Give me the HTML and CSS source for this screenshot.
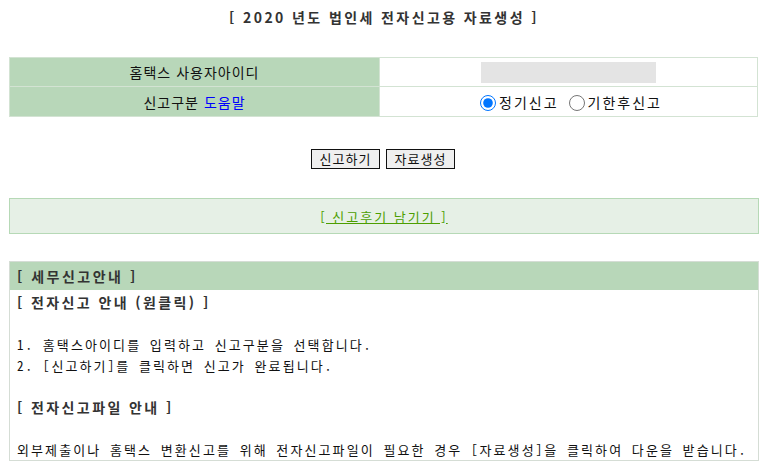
FILE: index.html
```html
<!DOCTYPE html>
<html lang="ko">
<head>
<meta charset="utf-8">
<title>법인세 전자신고용 자료생성</title>
<link rel="stylesheet" href="styles.css">
</head>
<body>
<div class="page">
  <h1 class="title">[ 2020 년도 법인세 전자신고용 자료생성 ]</h1>

  <table class="form">
    <tr class="row-id">
      <th>홈택스 사용자아이디</th>
      <td><input class="idbox" type="text" value="" aria-label="홈택스 사용자아이디"></td>
    </tr>
    <tr class="row-kind">
      <th>신고구분 <a class="help" href="#">도움말</a></th>
      <td>
        <label class="opt"><input type="radio" name="kind" checked>정기신고</label>
        <label class="opt"><input type="radio" name="kind">기한후신고</label>
      </td>
    </tr>
  </table>

  <div class="buttons">
    <button class="btn" type="button">신고하기</button>
    <button class="btn" type="button">자료생성</button>
  </div>

  <div class="review">
    <a class="review-link" href="#">[ 신고후기 남기기 ]</a>
  </div>

  <div class="guide">
    <div class="guide-head">[ 세무신고안내 ]</div>
    <div class="guide-body">
      <p class="sub">[ 전자신고 안내 (원클릭) ]</p>
      <p class="gap"></p>
      <p>1. 홈택스아이디를 입력하고 신고구분을 선택합니다.</p>
      <p>2. [신고하기]를 클릭하면 신고가 완료됩니다.</p>
      <p class="gap"></p>
      <p class="sub">[ 전자신고파일 안내 ]</p>
      <p class="gap"></p>
      <p>외부제출이나 홈택스 변환신고를 위해 전자신고파일이 필요한 경우 [자료생성]을 클릭하여 다운을 받습니다.</p>
    </div>
  </div>
</div>
</body>
</html>
```

FILE: styles.css
```css
html, body {
  margin: 0;
  padding: 0;
  background: #ffffff;
}

body {
  font-family: "Noto Sans CJK KR", "Noto Sans", sans-serif;
  color: #111111;
}

.page {
  width: 750px;
  margin-left: 9px;
  padding-top: 7px;
}

.title {
  margin: 0;
  font-size: 14px;
  line-height: 20px;
  font-weight: bold;
  letter-spacing: 2.4px;
  color: #333333;
  text-align: center;
}

.form {
  margin-top: 30px;
  width: 749px;
  border-collapse: collapse;
  border: 1px solid #d3e3d3;
  font-size: 14px;
  letter-spacing: 1px;
}

.form th,
.form td {
  border: 1px solid #d3e3d3;
  padding: 0;
  text-align: center;
  vertical-align: middle;
}

.form th {
  width: 369px;
  background: #b8d7b9;
  font-weight: normal;
  color: #111111;
}

.row-id th, .row-id td { height: 28px; }
.row-kind th, .row-kind td { height: 29px; }

.help {
  color: #0000ff;
  text-decoration: none;
}

.idbox {
  display: block;
  margin: 0 auto;
  width: 175px;
  height: 21px;
  box-sizing: border-box;
  border: none;
  background: #e4e4e4;
  padding: 0;
}

.opt {
  color: #111111;
  letter-spacing: 2px;
}

.opt input {
  margin: 0 3px 0 5px;
  width: 16px;
  height: 16px;
  vertical-align: -3px;
}

.buttons {
  margin-top: 32px;
  display: flex;
  justify-content: center;
  gap: 6px;
  padding-right: 2px;
}

.btn {
  box-sizing: border-box;
  width: 69px;
  height: 20px;
  padding: 0;
  border: 1px solid #111111;
  background: #efefef;
  font-family: "Noto Sans CJK KR", sans-serif;
  font-size: 13px;
  letter-spacing: 1px;
  line-height: 18px;
  color: #111111;
}

.review {
  margin-top: 29px;
  height: 34px;
  border: 1px solid #b6d9b6;
  background: #e6f0e6;
  display: flex;
  align-items: center;
  justify-content: center;
}

.review-link {
  color: #4c9e00;
  font-size: 13px;
  letter-spacing: 2px;
  text-decoration: underline;
}

.guide {
  margin-top: 27px;
  border: 1px solid #d5ddd5;
}

.guide-head {
  background: #b8d7b9;
  height: 28px;
  line-height: 28px;
  padding-left: 7px;
  font-size: 14px;
  font-weight: bold;
  letter-spacing: 2.5px;
  color: #333333;
}

.guide-body {
  padding: 2px 7px 0 7px;
  font-family: "Noto Sans Mono CJK KR", "Noto Sans CJK KR", monospace;
  font-size: 13px;
  letter-spacing: 2.1px;
  color: #111111;
}

.guide-body p {
  margin: 0;
  line-height: 21px;
  height: 21px;
  white-space: nowrap;
}

.guide-body .sub {
  font-family: "Noto Sans CJK KR", "Noto Sans", sans-serif;
  font-size: 14px;
  font-weight: bold;
  letter-spacing: 2.4px;
  color: #333333;
}
```
